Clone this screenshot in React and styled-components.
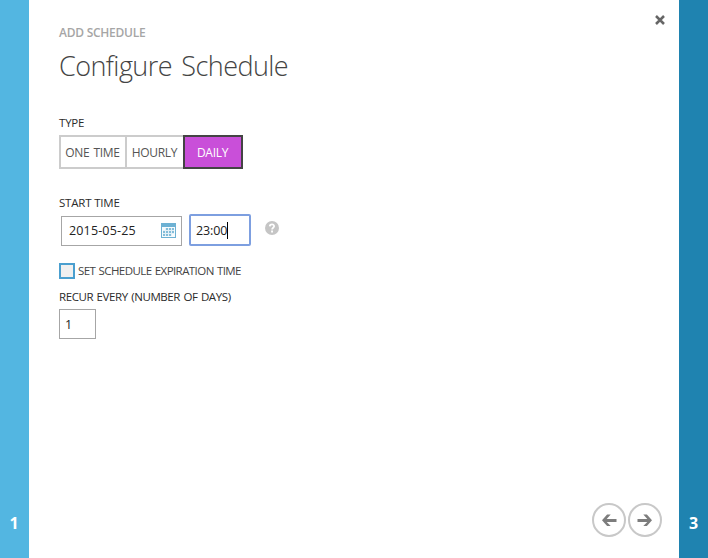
import React from "react";
import styled, { createGlobalStyle } from "styled-components";

const Global = createGlobalStyle`
  body { margin: 0; background: #fff; }
  * { box-sizing: border-box; }
`;

const Page = styled.div`
  display: grid;
  grid-template-columns: 29px 1fr 29px;
  height: 558px;
  overflow: hidden;
  font-family: "Open Sans", "Noto Sans", sans-serif;
  color: #333;
`;

const StepRail = styled.aside`
  display: flex;
  align-items: flex-end;
  justify-content: center;
  padding-bottom: 24px;
  padding-right: ${(p) => (p.$next ? 0 : 1)}px;
  background: ${(p) => (p.$next ? "#1f83b0" : "#53b6e1")};
  color: #fff;
  font-size: 16px;
  font-weight: 700;
  line-height: 22px;
`;

const Dialog = styled.main`
  display: flex;
  flex-direction: column;
  padding: 14px 17px 21px 30px;
`;

const Header = styled.header`
  display: flex;
  justify-content: space-between;
  height: 72px;
`;

const Eyebrow = styled.div`
  margin-top: 10px;
  height: 18px;
  font-size: 12px;
  font-weight: 600;
  line-height: 18px;
  letter-spacing: -0.25px;
  color: #a6a6a6;
`;

const Title = styled.h1`
  margin: 4px 0 0;
  font-size: 27px;
  font-weight: 300;
  line-height: 40px;
  letter-spacing: -0.57px;
  word-spacing: 3px;
  white-space: nowrap;
  color: #444;
`;

const CloseButton = styled.button`
  display: flex;
  align-self: flex-start;
  margin-right: -4px;
  padding: 0;
  border: 0;
  background: none;
`;

const Label = styled.div`
  height: 16px;
  margin-top: ${(p) => p.$gap}px;
  font-size: 11.5px;
  line-height: 16px;
  letter-spacing: ${(p) => p.$track || "-0.2px"};
  word-spacing: ${(p) => p.$words || "0"};
  white-space: nowrap;
  color: #2b2b2b;
`;

const Segments = styled.div`
  display: flex;
  margin-top: 4px;
`;

const Segment = styled.button`
  width: ${(p) => p.$width}px;
  height: 34px;
  padding: 0 1px 0 0;
  border: 2px solid ${(p) => (p.$active ? "#444" : "#ccc")};
  background: ${(p) => (p.$active ? "#c94fd9" : "#fff")};
  color: ${(p) => (p.$active ? "#fff" : "#555")};
  font: 12px "Open Sans", sans-serif;
  letter-spacing: -0.3px;
  word-spacing: 1.2px;
  white-space: nowrap;
  & + & { margin-left: -2px; }
`;

const TimeRow = styled.div`
  display: flex;
  align-items: center;
  height: 32px;
  margin-top: 3px;
  padding-left: 2px;
`;

const Field = styled.div`
  display: flex;
  align-items: center;
  width: ${(p) => p.$width}px;
  height: 30px;
  margin-top: ${(p) => p.$gap || 0}px;
  padding: 0 5px 0 ${(p) => p.$inset || 5}px;
  border: 1px solid #a6a6a6;
  font-size: 12.5px;
  letter-spacing: ${(p) => p.$track || "0"};
  color: #222;
`;

const DateText = styled.span`
  margin-top: -2px;
`;

const FocusedField = styled(Field)`
  height: 32px;
  margin: 0 14px 0 7px;
  padding: 0 0 0 5px;
  border: 2px solid #7d9fe0;
  border-radius: 2px;
`;

const Caret = styled.span`
  width: 1px;
  height: 17px;
  background: #000;
`;

const CalendarIcon = styled.svg`
  margin: -2px 0 0 auto;
`;

const HelpIcon = styled.svg`
  margin-top: -5px;
`;

const CheckRow = styled.label`
  display: flex;
  align-items: center;
  gap: 3px;
  height: 16px;
  margin-top: 17px;
  font-size: 11.5px;
  line-height: 16px;
  letter-spacing: -0.57px;
  word-spacing: 0.8px;
  white-space: nowrap;
  color: #444;
`;

const CheckBox = styled.span`
  width: 16px;
  height: 16px;
  border: 2px solid #4a9fcf;
  background: #f0f0f0;
`;

const Footer = styled.footer`
  display: flex;
  justify-content: flex-end;
  gap: 2px;
  margin-top: auto;
`;

const NavButton = styled.button`
  display: flex;
  align-items: center;
  justify-content: center;
  width: 34px;
  height: 34px;
  padding: 0;
  border: 2px solid #c8c8c8;
  border-radius: 50%;
  background: #fff;
`;

const Arrow = ({ back }) => (
  <svg width="16" height="14" viewBox="0 0 16 14" fill="#7d7d7d">
    <g transform={back ? "translate(16.5 0) scale(-1 1)" : "translate(-0.5 0)"}>
      <path d="M1 6H10.8L6.8 1.5H10.4L15.5 7.25L10.4 13H6.8L10.8 9H1Z" />
    </g>
  </svg>
);

export default function App() {
  return (
    <>
      <Global />
      <Page>
        <StepRail>1</StepRail>
        <Dialog>
          <Header>
            <div>
              <Eyebrow>ADD SCHEDULE</Eyebrow>
              <Title>Configure Schedule</Title>
            </div>
            <CloseButton aria-label="Close">
              <svg width="12" height="12" viewBox="0 0 12 12" stroke="#666" strokeWidth="2.5">
                <path d="M2 2L10 10M10 2L2 10" />
              </svg>
            </CloseButton>
          </Header>
          <Label $gap={29}>TYPE</Label>
          <Segments>
            <Segment $width={68}>ONE TIME</Segment>
            <Segment $width={60}>HOURLY</Segment>
            <Segment $width={60} $active>DAILY</Segment>
          </Segments>
          <Label $gap={26}>START TIME</Label>
          <TimeRow>
            <Field $width={121} $inset={7} $gap={2} $track="0.15px">
              <DateText>2015-05-25</DateText>
              <CalendarIcon width="15" height="15" viewBox="0 0 15 15" shapeRendering="crispEdges">
                <path fill="#6db1d3" d="M0 0H15V15H0Z" />
                <path fill="#f7fbfd" d="M1 4H14V14H1Z" />
                <path fill="#83bdd9" d="M4 5H13V11H10V13H2V7H4Z" />
                <path stroke="#e3f0f7" strokeWidth="1" d="M2 7.5H13M2 10.5H13M4.5 5V13M7.5 5V13M10.5 5V13" />
              </CalendarIcon>
            </Field>
            <FocusedField $width={62} $track="-0.15px">
              23:00<Caret />
            </FocusedField>
            <HelpIcon width="14" height="14" viewBox="0 0 14 14">
              <circle cx="7" cy="7" r="7" fill="#c5c5c5" />
              <path d="M4.8 5.4C4.9 2.8 9.2 2.8 9.1 5.3C9.1 6.8 7.1 6.7 7.1 8.5" fill="none" stroke="#fff" strokeWidth="1.8" />
              <path d="M6.1 9.6H8V11.4H6.1Z" fill="#fff" />
            </HelpIcon>
          </TimeRow>
          <CheckRow>
            <CheckBox role="checkbox" aria-checked="false" />
            <span>SET SCHEDULE EXPIRATION TIME</span>
          </CheckRow>
          <Label $gap={10} $track="-0.4px" $words="0.8px">RECUR EVERY (NUMBER OF DAYS)</Label>
          <Field $width={37} $gap={4}>1</Field>
          <Footer>
            <NavButton aria-label="Previous"><Arrow back /></NavButton>
            <NavButton aria-label="Next"><Arrow /></NavButton>
          </Footer>
        </Dialog>
        <StepRail $next>3</StepRail>
      </Page>
    </>
  );
}
